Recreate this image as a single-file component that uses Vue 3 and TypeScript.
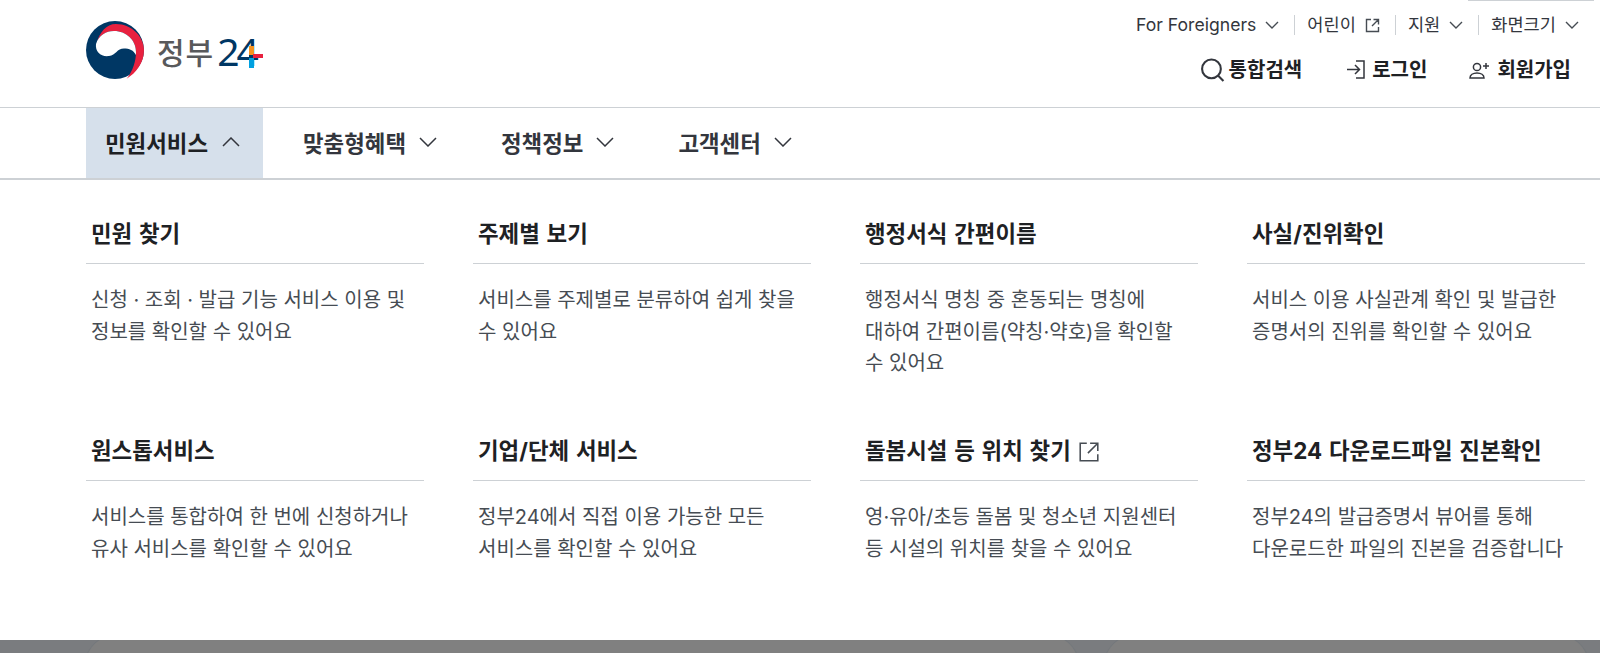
<script setup lang="ts">
interface Card { title: string; desc: string[]; ext?: boolean }

const topLinks = [
  { label: 'For Foreigners', icon: 'down' },
  { label: '어린이', icon: 'ext' },
  { label: '지원', icon: 'down' },
  { label: '화면크기', icon: 'down' },
]

const menus = ['맞춤형혜택', '정책정보', '고객센터']

const cards: Card[] = [
  { title: '민원 찾기', desc: ['신청 · 조회 · 발급 기능 서비스 이용 및', '정보를 확인할 수 있어요'] },
  { title: '주제별 보기', desc: ['서비스를 주제별로 분류하여 쉽게 찾을', '수 있어요'] },
  { title: '행정서식 간편이름', desc: ['행정서식 명칭 중 혼동되는 명칭에', '대하여 간편이름(약칭·약호)을 확인할', '수 있어요'] },
  { title: '사실/진위확인', desc: ['서비스 이용 사실관계 확인 및 발급한', '증명서의 진위를 확인할 수 있어요'] },
  { title: '원스톱서비스', desc: ['서비스를 통합하여 한 번에 신청하거나', '유사 서비스를 확인할 수 있어요'] },
  { title: '기업/단체 서비스', desc: ['정부24에서 직접 이용 가능한 모든', '서비스를 확인할 수 있어요'] },
  { title: '돌봄시설 등 위치 찾기', desc: ['영·유아/초등 돌봄 및 청소년 지원센터', '등 시설의 위치를 찾을 수 있어요'], ext: true },
  { title: '정부24 다운로드파일 진본확인', desc: ['정부24의 발급증명서 뷰어를 통해', '다운로드한 파일의 진본을 검증합니다'] },
]
</script>

<template>
  <div class="page">
    <header class="header">
      <a class="logo">
        <svg width="58" height="58" viewBox="0 0 58 58">
          <circle cx="29" cy="29" r="29" fill="#003764" />
          <path d="M10 23C14 11 20 3 30 3C46 3 58 16 58 29C58 42 50 52 40.7 57.7C47 50 50 40 50 31C50 19 40 10 28 10C20 10 13 14 10 23z" fill="#e8213f" />
          <path d="M10 23C13 14 20 10 28 10C40 10 50 19 50 31C50 32 50 33 49.6 34C48 29 43 27.5 38 27.5C31 27.5 30 34 23 35C15 36 9 31 10 23z" fill="#fff" />
        </svg>
        <span class="logo-name">정부</span>
        <span class="logo-num">24<i class="plus" /></span>
      </a>
      <div class="util">
        <ul class="top-links">
          <li v-for="link in topLinks" :key="link.label">
            {{ link.label }}
            <svg v-if="link.icon === 'down'" class="chev" width="14" height="8" viewBox="0 0 14 8"><path d="M1 1l6 6 6-6" /></svg>
            <svg v-else class="ext" width="15" height="15" viewBox="0 0 15 15"><path d="M6 1.5H1.5v12h12V9M8.5 1.5h5v5M13.5 1.5L7 8" /></svg>
          </li>
        </ul>
        <div class="actions">
          <span class="action search">
            <svg width="25" height="25" viewBox="0 0 24 24"><circle cx="11" cy="10.5" r="9" /><path d="M17.5 17l5 5" /></svg>
            통합검색
          </span>
          <span class="action login">
            <svg width="20" height="20" viewBox="0 0 20 20"><path d="M10 1h8v17h-8M1 9.5h12M9 5l4.5 4.5L9 14" /></svg>
            로그인
          </span>
          <span class="action join">
            <svg width="22" height="18" viewBox="0 0 22 18"><circle cx="8" cy="6" r="3.6" /><path d="M1 17c0-3 3-5 7-5s7 2 7 5zM17 2v6M14 5h6" /></svg>
            회원가입
          </span>
        </div>
      </div>
    </header>

    <nav class="gnb">
      <div class="gnb-item active">
        민원서비스
        <svg width="18" height="10" viewBox="0 0 18 10"><path d="M1 9l8-8 8 8" /></svg>
      </div>
      <div v-for="menu in menus" :key="menu" class="gnb-item">
        {{ menu }}
        <svg width="18" height="10" viewBox="0 0 18 10"><path d="M1 1l8 8 8-8" /></svg>
      </div>
    </nav>

    <section class="panel">
      <div v-for="card in cards" :key="card.title" class="card">
        <h3>
          {{ card.title }}
          <svg v-if="card.ext" class="ext-lg" width="22" height="22" viewBox="0 0 20 20"><path d="M8 2H2v16h16v-6M11 2h7v7M18 2l-9 9" /></svg>
        </h3>
        <p><span v-for="line in card.desc" :key="line">{{ line }}</span></p>
      </div>
    </section>

    <div class="dim">
      <div class="tile first" />
      <div class="tile second" />
    </div>
  </div>
</template>

<style>
html, body { margin: 0; background: #fff; }
</style>

<style scoped>
.page { width: 1600px; height: 653px; overflow: hidden; font-family: "Inter", "Noto Sans CJK KR", sans-serif; color: #1e2124; }

.header { height: 108px; box-sizing: border-box; border-bottom: 1px solid #cdd1d5; padding: 0 29px 0 86px; display: flex; justify-content: space-between; }
.logo { display: flex; align-items: center; height: 101px; }
.logo svg { margin-bottom: 2px; }
.logo-name { font-size: 30px; font-weight: 500; color: #58595b; margin-left: 13px; letter-spacing: 1px; }
.logo-num { position: relative; margin-left: 3px; font-size: 39px; line-height: 40px; font-weight: 400; color: #003764; letter-spacing: -3px; font-family: "Noto Sans", sans-serif; }
.plus { position: absolute; left: 32px; top: 15px; width: 5px; height: 22px; background: linear-gradient(#f7931e 0 40%, #003764 40% 55%, #00a0e0 55% 100%); }
.plus::after { content: ""; position: absolute; left: 4px; width: 10px; top: 8px; height: 4px; background: #e8213f; }

.util { display: flex; flex-direction: column; align-items: flex-end; }
.top-links { list-style: none; margin: 0 -8px 0 0; padding: 15px 0 0; display: flex; height: 35px; box-sizing: border-box; }
.top-links li { position: relative; display: flex; align-items: center; gap: 9px; font-size: 17.6px; line-height: 20px; height: 20px; padding: 0 15px 0 12px; border-left: 1px solid #cdd1d5; color: #33363d; }
.top-links li:first-child { border-left: 0; }
.top-links li:last-child { padding-right: 0; }
.top-links li:last-child::before { content: ""; position: absolute; left: -11px; top: -15px; width: 126px; height: 1px; background: #cdd1d5; }
.top-links svg { fill: none; stroke: #464c53; stroke-width: 1.4; }

.actions { display: flex; align-items: center; gap: 42px; margin-top: 21px; }
.action { display: flex; align-items: center; gap: 6px; font-size: 20px; font-weight: 700; line-height: 28px; }
.action svg { fill: none; stroke: #33363d; stroke-width: 1.5; }
.search { gap: 4px; margin-right: 2px; }
.search svg { stroke-width: 2; }

.gnb { height: 72px; box-sizing: border-box; border-bottom: 2px solid #cdd1d5; padding-left: 86px; display: flex; }
.gnb-item { display: flex; align-items: center; gap: 13px; padding: 0 32px 2px; font-size: 22.4px; font-weight: 700; color: #33363d; }
.gnb-item.active { width: 177px; box-sizing: border-box; gap: 14px; padding: 0 0 2px 19px; margin-right: 8px; background: #d6e0eb; color: #1e2124; }
.gnb-item svg { fill: none; stroke: #33363d; stroke-width: 1.5; }

.panel { height: 460px; box-sizing: border-box; padding: 36px 15px 0 86px; display: grid; grid-template-columns: repeat(4, 338px); column-gap: 49px; grid-auto-rows: 217px; }
.card h3 { margin: 0; height: 48px; box-sizing: border-box; padding: 1px 5px 0; border-bottom: 1px solid #cdd1d5; display: flex; align-items: flex-start; gap: 7px; font-size: 22.4px; line-height: 34px; font-weight: 700; word-spacing: 1.5px; color: #1e2124; }
.ext-lg { margin-top: 7px; fill: none; stroke: #464c53; stroke-width: 1.4; }
.card p { margin: 21px 0 0; padding: 0 5px; font-size: 20px; line-height: 31.5px; color: #464c53; }
.card p span { display: block; }

.dim { height: 13px; background: #7a7c7f; display: flex; overflow: hidden; padding-left: 85px; gap: 25px; }
.tile { height: 80px; margin-top: -5px; background: #808080; border-radius: 32px 32px 0 0; box-shadow: 0 0 0 1px #74787c; }
.first { width: 994px; }
.second { width: 485px; }
</style>
